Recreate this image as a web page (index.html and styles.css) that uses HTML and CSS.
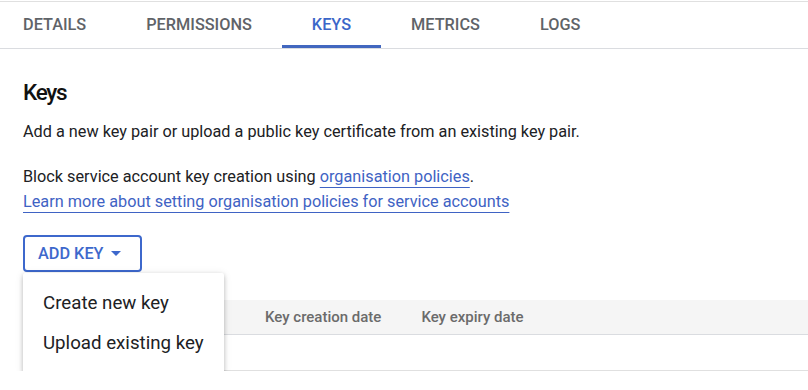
FILE: index.html
```html
<!DOCTYPE html>
<html lang="en">
<head>
    <meta charset="UTF-8">
    <meta name="viewport" content="width=device-width, initial-scale=1.0">
    <title>Service account keys</title>
    <link rel="stylesheet" href="styles.css">
</head>
<body>

    <nav class="tabs">
        <a class="tab tab-first">Details</a>
        <a class="tab">Permissions</a>
        <a class="tab active">Keys</a>
        <a class="tab">Metrics</a>
        <a class="tab">Logs</a>
    </nav>

    <main class="content">
        <h1 class="title">Keys</h1>
        <p class="intro">Add a new key pair or upload a public key certificate from an existing key pair.</p>

        <p class="policy">
            Block service account key creation using <a class="link" href="#">organisation policies</a>.<br>
            <a class="link" href="#">Learn more about setting organisation policies for service accounts</a>
        </p>

        <div class="add-key">
            <button class="add-key-btn">
                Add key
                <svg class="caret" width="12" height="6" viewBox="0 0 12 6"><path d="M1 0h10L6 5z" fill="currentColor"/></svg>
            </button>

            <ul class="menu">
                <li class="menu-item">Create new key</li>
                <li class="menu-item">Upload existing key</li>
            </ul>
        </div>

        <div class="keys-table">
            <div class="table-head">
                <span class="col col-type">Type</span>
                <span class="col col-status">Status</span>
                <span class="col col-key">Key</span>
                <span class="col col-created">Key creation date</span>
                <span class="col col-expiry">Key expiry date</span>
            </div>
            <div class="table-row"></div>
        </div>
    </main>

</body>
</html>
```

FILE: styles.css
```css
body {
    margin: 0;
    font-family: Roboto, 'Noto Sans', Arial, sans-serif;
    color: #202124;
    background-color: #fff;
}

/* --- Tab bar --- */
.tabs {
    display: flex;
    margin-top: 1px;
    border-top: 1px solid #e0e0e0;
    border-bottom: 1px solid #dadce0;
    height: 46px;
}

.tab {
    display: flex;
    align-items: center;
    padding: 0 30px;
    padding-top: 1px;
    font-size: 16.3px;
    font-weight: 500;
    text-transform: uppercase;
    color: #5f6368;
    border-bottom: 3px solid transparent;
    box-sizing: border-box;
    cursor: pointer;
}

.tab-first {
    padding-left: 23px;
}

.tab.active {
    color: #3b66c9;
    border-bottom-color: #4267bf;
}

/* --- Main content --- */
.content {
    padding: 0 23px;
}

.title {
    margin: 29px 0 0;
    font-size: 22.5px;
    line-height: 28px;
    font-weight: 500;
    letter-spacing: -1.3px;
    color: #111;
}

.intro {
    margin: 14px 0 0;
    font-size: 16.25px;
    line-height: 24px;
}

.policy {
    margin: 20px 0 0;
    font-size: 16.25px;
    line-height: 25px;
}

.link {
    color: #3f63c4;
    text-decoration: underline;
    text-decoration-color: #3f63c4;
    text-underline-offset: 5px;
}

.add-key {
    position: relative;
    margin-top: 21px;
    width: fit-content;
}

.add-key-btn {
    display: flex;
    align-items: center;
    gap: 6px;
    height: 37px;
    padding: 0 18px 0 13px;
    background: #fff;
    border: 2px solid #3d68cc;
    border-radius: 4px;
    font-family: inherit;
    font-size: 16.3px;
    font-weight: 500;
    color: #3d68cc;
    text-transform: uppercase;
    cursor: pointer;
}

.caret {
    margin-top: 1px;
}

.menu {
    position: absolute;
    top: 38px;
    left: 0;
    z-index: 2;
    width: 201px;
    margin: 0;
    padding: 10px 0 11px;
    list-style: none;
    background: #fff;
    border-radius: 2px;
    box-shadow: 0 2px 4px rgba(0,0,0,0.22), 0 1px 8px rgba(0,0,0,0.1);
}

.menu-item {
    height: 40px;
    line-height: 40px;
    padding: 0 20px;
    font-size: 18.7px;
    color: #202124;
    white-space: nowrap;
}

/* --- Keys table --- */
.keys-table {
    margin: 28px -23px 0 0;
}

.table-head {
    display: flex;
    height: 34px;
    align-items: center;
    background: #f5f5f5;
    border-bottom: 1px solid #dadce0;
    font-size: 15px;
    font-weight: 500;
    color: #6b6b6b;
}

.col {
    padding: 0 20px;
    white-space: nowrap;
}

.col-type { width: 40px; }
.col-status { width: 36px; }
.col-key { width: 26px; }

.table-row {
    height: 35px;
    border-bottom: 1px solid #e0e0e0;
}
```
